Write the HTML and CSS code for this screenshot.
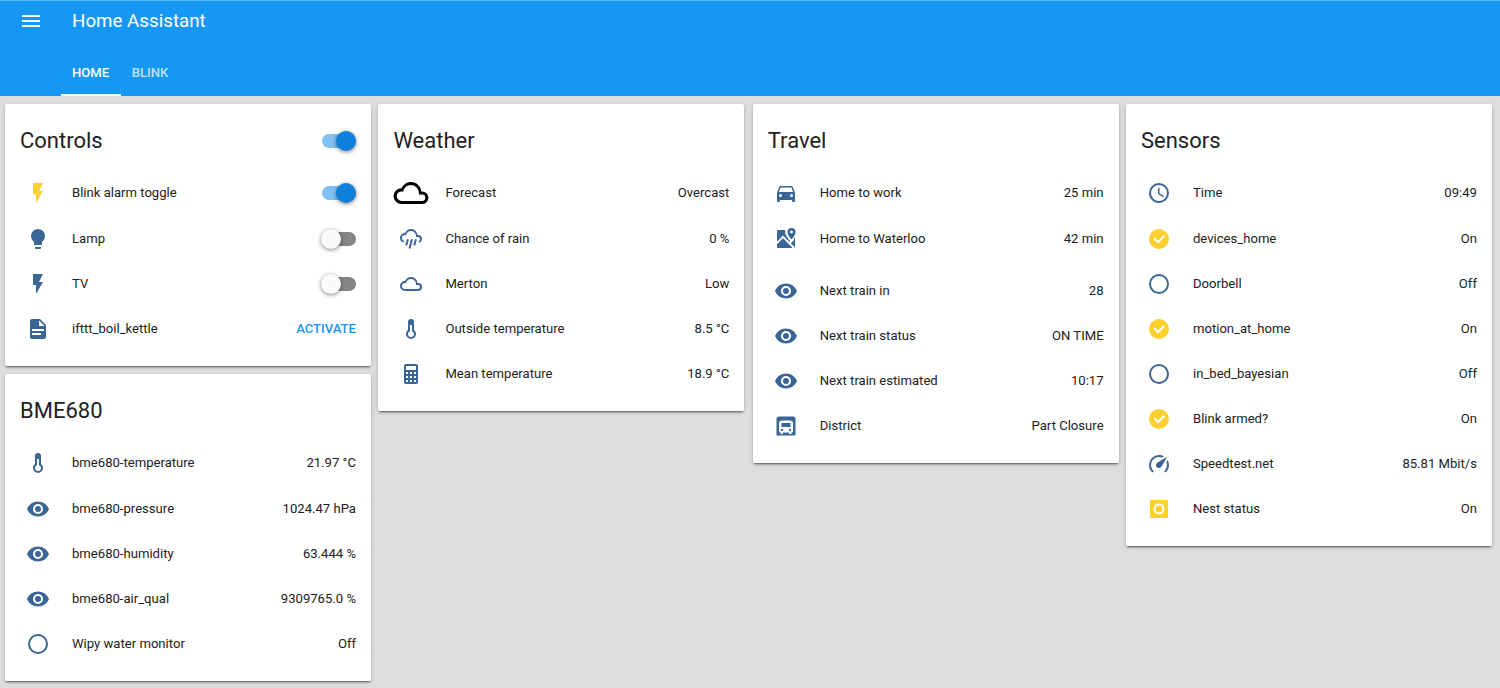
FILE: index.html
```html
<!DOCTYPE html>
<html lang="en">
<head>
<meta charset="utf-8">
<title>Home Assistant</title>
<link rel="stylesheet" href="styles.css">
</head>
<body>
<svg class="defs" aria-hidden="true">
  <symbol id="i-menu" viewBox="0 0 24 24"><path d="M3,6H21V8H3V6M3,11H21V13H3V11M3,16H21V18H3V16Z"/></symbol>
  <symbol id="i-flash" viewBox="0 0 24 24"><path d="M7,2V13H10V22L17,10H13L17,2H7Z"/></symbol>
  <symbol id="i-bulb" viewBox="0 0 24 24"><path d="M12,2A7,7 0 0,0 5,9C5,11.38 6.19,13.47 8,14.74V17A1,1 0 0,0 9,18H15A1,1 0 0,0 16,17V14.74C17.81,13.47 19,11.38 19,9A7,7 0 0,0 12,2M9,21A1,1 0 0,0 10,22H14A1,1 0 0,0 15,21V20H9V21Z"/></symbol>
  <symbol id="i-file" viewBox="0 0 24 24"><path d="M13,9H18.5L13,3.5V9M6,2H14L20,8V20A2,2 0 0,1 18,22H6C4.89,22 4,21.1 4,20V4C4,2.89 4.89,2 6,2M15,18V16H6V18H15M18,14V12H6V14H18Z"/></symbol>
  <symbol id="i-cloud" viewBox="0 0 24 24"><path d="M6,19A5,5 0 0,1 1,14A5,5 0 0,1 6,9C7,6.65 9.3,5 12,5C15.43,5 18.24,7.66 18.5,11.03L19,11A4,4 0 0,1 23,15A4,4 0 0,1 19,19H6M19,13H17V12A5,5 0 0,0 12,7C9.5,7 7.45,8.82 7.06,11.19C6.73,11.07 6.37,11 6,11A3,3 0 0,0 3,14A3,3 0 0,0 6,17H19A2,2 0 0,0 21,15A2,2 0 0,0 19,13Z"/></symbol>
  <symbol id="i-rain" viewBox="0 0 24 24"><path d="M9,12C9.53,12.14 9.85,12.69 9.71,13.22L8.41,18.05C8.27,18.59 7.72,18.9 7.19,18.76C6.65,18.62 6.34,18.07 6.5,17.54L7.78,12.71C7.92,12.17 8.47,11.86 9,12M13,12C13.53,12.14 13.85,12.69 13.71,13.22L11.64,20.95C11.5,21.5 10.95,21.8 10.41,21.66C9.88,21.5 9.56,20.97 9.7,20.43L11.78,12.71C11.92,12.17 12.47,11.86 13,12M17,12C17.53,12.14 17.85,12.69 17.71,13.22L16.41,18.05C16.27,18.59 15.72,18.9 15.19,18.76C14.65,18.62 14.34,18.07 14.5,17.54L15.78,12.71C15.92,12.17 16.47,11.86 17,12M17,10V9A5,5 0 0,0 12,4C9.5,4 7.45,5.82 7.06,8.19C6.73,8.07 6.37,8 6,8A3,3 0 0,0 3,11C3,12.11 3.6,13.08 4.5,13.6V13.59C5,13.87 5.14,14.5 4.87,14.96C4.59,15.43 4,15.6 3.5,15.32V15.33C2,14.47 1,12.85 1,11A5,5 0 0,1 6,6C7,3.65 9.3,2 12,2C15.43,2 18.24,4.66 18.5,8.03L19,8A4,4 0 0,1 23,12C23,13.5 22.2,14.77 21,15.46V15.46C20.5,15.73 19.91,15.57 19.63,15.09C19.36,14.61 19.5,14 20,13.72V13.73C20.6,13.39 21,12.74 21,12A2,2 0 0,0 19,10H17Z"/></symbol>
  <symbol id="i-thermo" viewBox="0 0 24 24"><path d="M17,17A5,5 0 0,1 12,22A5,5 0 0,1 7,17C7,15.36 7.79,13.91 9,13V5A3,3 0 0,1 12,2A3,3 0 0,1 15,5V13C16.21,13.91 17,15.36 17,17M11,8V14.17C9.83,14.58 9,15.69 9,17A3,3 0 0,0 12,20A3,3 0 0,0 15,17C15,15.69 14.17,14.58 13,14.17V8H11Z"/></symbol>
  <symbol id="i-calc" viewBox="0 0 24 24"><path d="M7,2H17A2,2 0 0,1 19,4V20A2,2 0 0,1 17,22H7A2,2 0 0,1 5,20V4A2,2 0 0,1 7,2M7,4V8H17V4H7M7,10V12H9V10H7M11,10V12H13V10H11M15,10V12H17V10H15M7,14V16H9V14H7M11,14V16H13V14H11M15,14V16H17V14H15M7,18V20H9V18H7M11,18V20H13V18H11M15,18V20H17V18H15Z"/></symbol>
  <symbol id="i-car" viewBox="0 0 24 24"><path d="M5,11L6.5,6.5H17.5L19,11M17.5,16A1.5,1.5 0 0,1 16,14.5A1.5,1.5 0 0,1 17.5,13A1.5,1.5 0 0,1 19,14.5A1.5,1.5 0 0,1 17.5,16M6.5,16A1.5,1.5 0 0,1 5,14.5A1.5,1.5 0 0,1 6.5,13A1.5,1.5 0 0,1 8,14.5A1.5,1.5 0 0,1 6.5,16M18.92,6C18.72,5.42 18.16,5 17.5,5H6.5C5.84,5 5.28,5.42 5.08,6L3,12V20A1,1 0 0,0 4,21H5A1,1 0 0,0 6,20V19H18V20A1,1 0 0,0 19,21H20A1,1 0 0,0 21,20V12L18.92,6Z"/></symbol>
  <symbol id="i-map" viewBox="0 0 24 24">
    <path d="M4,3H15V21H4A1,1 0 0,1 3,20V4A1,1 0 0,1 4,3Z"/>
    <path d="M13,8H21V20A1,1 0 0,1 20,21H13Z"/>
    <path class="cut" d="M17,-1.5A6,6 0 0,0 11,4.5C11,8 14,11.5 17,15L21.5,9.5V-1.5Z"/>
    <path d="M17.5,1A4,4 0 0,0 13.5,5C13.5,8 17.5,12.5 17.5,12.5S21.5,8 21.5,5A4,4 0 0,0 17.5,1M17.5,3.6A1.4,1.4 0 1,1 17.5,6.4A1.4,1.4 0 1,1 17.5,3.6Z" fill-rule="evenodd"/>
    <path class="cut" d="M3,14.5L9,8.5L20.8,20.3L19.4,21.7L9,11.3L3,17.3ZM14.4,15.9L19,11.3L20.4,12.7L15.8,17.3Z"/>
  </symbol>
  <symbol id="i-eye" viewBox="0 0 24 24"><path d="M12,9A3,3 0 0,0 9,12A3,3 0 0,0 12,15A3,3 0 0,0 15,12A3,3 0 0,0 12,9M12,17A5,5 0 0,1 7,12A5,5 0 0,1 12,7A5,5 0 0,1 17,12A5,5 0 0,1 12,17M12,4.5C7,4.5 2.73,7.61 1,12C2.73,16.39 7,19.5 12,19.5C17,19.5 21.27,16.39 23,12C21.27,7.61 17,4.5 12,4.5Z"/></symbol>
  <symbol id="i-train" viewBox="0 0 24 24">
    <path d="M5,2.5H19A2.5,2.5 0 0,1 21.5,5V21.5H2.5V5A2.5,2.5 0 0,1 5,2.5Z"/>
    <path class="cut" d="M8,6.5H16A3,3 0 0,1 19,9.5V17A1.5,1.5 0 0,1 17.5,18.5V20H15V18.5H9V20H6.5V18.5A1.5,1.5 0 0,1 5,17V9.5A3,3 0 0,1 8,6.5Z"/>
    <path d="M7.5,9H16.5V13H7.5ZM7,15H9V17H7ZM15,15H17V17H15Z"/>
  </symbol>
  <symbol id="i-clock" viewBox="0 0 24 24"><path d="M12,20A8,8 0 0,0 20,12A8,8 0 0,0 12,4A8,8 0 0,0 4,12A8,8 0 0,0 12,20M12,2A10,10 0 0,1 22,12A10,10 0 0,1 12,22C6.47,22 2,17.5 2,12A10,10 0 0,1 12,2M12.5,7V12.25L17,14.92L16.25,16.15L11,13V7H12.5Z"/></symbol>
  <symbol id="i-check" viewBox="0 0 24 24"><path d="M12,2A10,10 0 0,1 22,12A10,10 0 0,1 12,22A10,10 0 0,1 2,12A10,10 0 0,1 12,2M11,16.5L18,9.5L16.59,8.09L11,13.67L7.91,10.59L6.5,12L11,16.5Z"/></symbol>
  <symbol id="i-circle" viewBox="0 0 24 24"><path d="M12,20A8,8 0 0,1 4,12A8,8 0 0,1 12,4A8,8 0 0,1 20,12A8,8 0 0,1 12,20M12,2A10,10 0 0,0 2,12A10,10 0 0,0 12,22A10,10 0 0,0 22,12A10,10 0 0,0 12,2Z"/></symbol>
  <symbol id="i-speed" viewBox="0 0 24 24"><path d="M12,16A3,3 0 0,1 9,13C9,11.88 9.61,10.9 10.5,10.39L20.21,4.77L14.68,14.35C14.18,15.33 13.17,16 12,16M12,3C13.81,3 15.5,3.5 16.97,4.32L14.87,5.53C14,5.19 13,5 12,5A8,8 0 0,0 4,13C4,15.21 4.89,17.21 6.34,18.65H6.35C6.74,19.04 6.74,19.67 6.35,20.06C5.96,20.45 5.32,20.45 4.93,20.07V20.07C3.12,18.26 2,15.76 2,13A10,10 0 0,1 12,3M22,13C22,15.76 20.88,18.26 19.07,20.07V20.07C18.68,20.45 18.05,20.45 17.66,20.06C17.27,19.67 17.27,19.04 17.66,18.65V18.65C19.11,17.2 20,15.21 20,13C20,12 19.81,11 19.46,10.1L20.67,8C21.5,9.5 22,11.18 22,13Z"/></symbol>
  <symbol id="i-nest" viewBox="0 0 24 24"><path fill-rule="evenodd" d="M4,3H20A1,1 0 0,1 21,4V20A1,1 0 0,1 20,21H4A1,1 0 0,1 3,20V4A1,1 0 0,1 4,3ZM12,6.5A5.5,5.5 0 1,0 12,17.5A5.5,5.5 0 1,0 12,6.5ZM12,8.5A3.5,3.5 0 1,1 12,15.5A3.5,3.5 0 1,1 12,8.5Z"/></symbol>
</svg>

<header class="appbar">
  <div class="toolbar">
    <svg class="menu"><use href="#i-menu"/></svg>
    <span class="app-title">Home Assistant</span>
  </div>
  <nav class="tabs">
    <a class="tab active">HOME</a>
    <a class="tab">BLINK</a>
  </nav>
</header>

<main class="columns">
  <div class="column">
    <section class="card">
      <div class="card-head"><h2>Controls</h2><span class="toggle on"></span></div>
      <div class="row"><span class="ic yellow"><svg><use href="#i-flash"/></svg></span><span class="name">Blink alarm toggle</span><span class="toggle on"></span></div>
      <div class="row"><span class="ic"><svg><use href="#i-bulb"/></svg></span><span class="name">Lamp</span><span class="toggle"></span></div>
      <div class="row"><span class="ic"><svg><use href="#i-flash"/></svg></span><span class="name">TV</span><span class="toggle"></span></div>
      <div class="row"><span class="ic"><svg><use href="#i-file"/></svg></span><span class="name">ifttt_boil_kettle</span><span class="action">ACTIVATE</span></div>
    </section>
    <section class="card">
      <div class="card-head"><h2>BME680</h2></div>
      <div class="row"><span class="ic"><svg><use href="#i-thermo"/></svg></span><span class="name">bme680-temperature</span><span class="val">21.97 °C</span></div>
      <div class="row"><span class="ic"><svg><use href="#i-eye"/></svg></span><span class="name">bme680-pressure</span><span class="val">1024.47 hPa</span></div>
      <div class="row"><span class="ic"><svg><use href="#i-eye"/></svg></span><span class="name">bme680-humidity</span><span class="val">63.444 %</span></div>
      <div class="row"><span class="ic"><svg><use href="#i-eye"/></svg></span><span class="name">bme680-air_qual</span><span class="val">9309765.0 %</span></div>
      <div class="row"><span class="ic"><svg><use href="#i-circle"/></svg></span><span class="name">Wipy water monitor</span><span class="val">Off</span></div>
    </section>
  </div>

  <div class="column">
    <section class="card">
      <div class="card-head"><h2>Weather</h2></div>
      <div class="row"><span class="ic black"><svg class="big"><use href="#i-cloud"/></svg></span><span class="name">Forecast</span><span class="val">Overcast</span></div>
      <div class="row"><span class="ic"><svg><use href="#i-rain"/></svg></span><span class="name">Chance of rain</span><span class="val">0 %</span></div>
      <div class="row"><span class="ic"><svg><use href="#i-cloud"/></svg></span><span class="name">Merton</span><span class="val">Low</span></div>
      <div class="row"><span class="ic"><svg><use href="#i-thermo"/></svg></span><span class="name">Outside temperature</span><span class="val">8.5 °C</span></div>
      <div class="row"><span class="ic"><svg><use href="#i-calc"/></svg></span><span class="name">Mean temperature</span><span class="val">18.9 °C</span></div>
    </section>
  </div>

  <div class="column">
    <section class="card">
      <div class="card-head"><h2>Travel</h2></div>
      <div class="row"><span class="ic"><svg><use href="#i-car"/></svg></span><span class="name">Home to work</span><span class="val">25 min</span></div>
      <div class="row"><span class="ic"><svg><use href="#i-map"/></svg></span><span class="name">Home to Waterloo</span><span class="val">42 min</span></div>
      <div class="row spaced"><span class="ic"><svg><use href="#i-eye"/></svg></span><span class="name">Next train in</span><span class="val">28</span></div>
      <div class="row"><span class="ic"><svg><use href="#i-eye"/></svg></span><span class="name">Next train status</span><span class="val">ON TIME</span></div>
      <div class="row"><span class="ic"><svg><use href="#i-eye"/></svg></span><span class="name">Next train estimated</span><span class="val">10:17</span></div>
      <div class="row"><span class="ic"><svg><use href="#i-train"/></svg></span><span class="name">District</span><span class="val">Part Closure</span></div>
    </section>
  </div>

  <div class="column">
    <section class="card">
      <div class="card-head"><h2>Sensors</h2></div>
      <div class="row"><span class="ic"><svg><use href="#i-clock"/></svg></span><span class="name">Time</span><span class="val">09:49</span></div>
      <div class="row"><span class="ic yellow"><svg><use href="#i-check"/></svg></span><span class="name">devices_home</span><span class="val">On</span></div>
      <div class="row"><span class="ic"><svg><use href="#i-circle"/></svg></span><span class="name">Doorbell</span><span class="val">Off</span></div>
      <div class="row"><span class="ic yellow"><svg><use href="#i-check"/></svg></span><span class="name">motion_at_home</span><span class="val">On</span></div>
      <div class="row"><span class="ic"><svg><use href="#i-circle"/></svg></span><span class="name">in_bed_bayesian</span><span class="val">Off</span></div>
      <div class="row"><span class="ic yellow"><svg><use href="#i-check"/></svg></span><span class="name">Blink armed?</span><span class="val">On</span></div>
      <div class="row"><span class="ic"><svg><use href="#i-speed"/></svg></span><span class="name">Speedtest.net</span><span class="val">85.81 Mbit/s</span></div>
      <div class="row"><span class="ic yellow"><svg><use href="#i-nest"/></svg></span><span class="name">Nest status</span><span class="val">On</span></div>
    </section>
  </div>
</main>
</body>
</html>
```

FILE: styles.css
```css
* { box-sizing: border-box; }

html, body {
  height: 100%;
  margin: 0;
}

body {
  overflow: hidden;
  background: #dedede;
  color: #212121;
  font-family: Roboto, "Liberation Sans", sans-serif;
  font-size: 13.1px;
}

.defs { display: none; }

/* App bar */
.appbar {
  height: 96px;
  background: #1597f3;
  color: #fff;
  border-top: 1px solid #5cb6f6;
}

.toolbar {
  display: flex;
  align-items: center;
  height: 40px;
  padding-left: 19px;
}

.menu {
  width: 24px;
  height: 24px;
  margin-right: 29px;
  fill: #fff;
}

.app-title {
  font-size: 18.75px;
  font-weight: 400;
}

.tabs {
  display: flex;
  height: 55px;
  padding-left: 61px;
}

.tab {
  display: flex;
  align-items: center;
  height: 100%;
  padding: 9px 11.5px 0 11px;
  border-bottom: 2px solid transparent;
  font-weight: 500;
  opacity: 0.72;
}

.tab.active {
  opacity: 1;
  border-bottom-color: #fff;
}

/* Columns */
.columns {
  display: grid;
  grid-template-columns: 366px 367px 365.8px 366px;
  column-gap: 7.4px;
  padding: 8px 0 0 5px;
}

.column {
  display: flex;
  flex-direction: column;
  gap: 8px;
}

.column:nth-child(2) {
  padding-right: 1px;
}

/* Cards */
.card {
  padding: 0 15px 15px;
  background: #fff;
  border-radius: 2px;
  box-shadow: 0 2px 2px rgba(0, 0, 0, 0.18), 0 1px 5px rgba(0, 0, 0, 0.14), 0 3px 1px -2px rgba(0, 0, 0, 0.3);
}

.card-head {
  display: flex;
  align-items: center;
  justify-content: space-between;
  height: 66px;
  padding-top: 7px;
}

.card-head .toggle {
  margin-top: 1px;
}

.card-head h2 {
  margin: 0;
  font-size: 22px;
  font-weight: 400;
  color: #212121;
}

.row {
  display: flex;
  align-items: center;
  height: 45px;
}

.card-head + .row {
  margin-bottom: 1px;
}

.row.spaced {
  margin-top: 7px;
}

.ic {
  display: flex;
  justify-content: center;
  flex: none;
  width: 36px;
  margin-right: 16px;
  fill: #3a6596;
}

.ic svg {
  flex: none;
  width: 24px;
  height: 24px;
}

.ic svg.big {
  width: 38px;
  height: 38px;
}

.ic.yellow { fill: #fdd02f; }
.ic.black { fill: #000; }

.cut { fill: #fff; }

.name { flex: 1; }

.val { color: #212121; }

.action {
  color: #1597f3;
  font-weight: 500;
}

/* Toggle */
.toggle {
  position: relative;
  flex: none;
  width: 34px;
  height: 14px;
  border-radius: 7px;
  background: #858585;
}

.toggle::after {
  content: "";
  position: absolute;
  top: -3px;
  left: -1px;
  width: 20px;
  height: 20px;
  border-radius: 50%;
  background: #fafafa;
  box-shadow: 0 1px 4px rgba(0, 0, 0, 0.5);
}

.toggle.on { background: #80c0f2; }

.toggle.on::after {
  left: 14px;
  background: #0f80dc;
}
```
